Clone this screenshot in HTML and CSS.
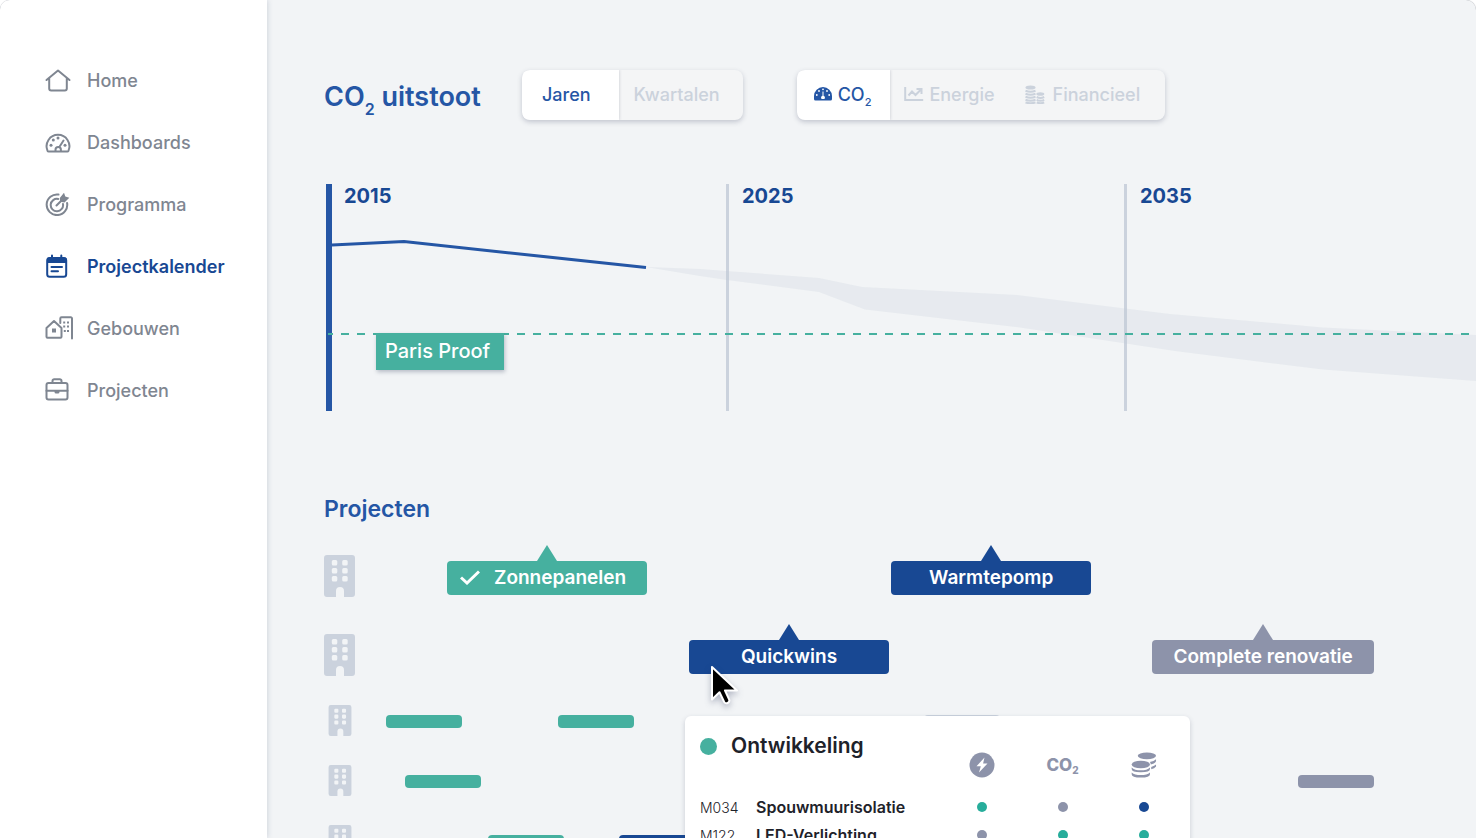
FILE: index.html
```html
<!DOCTYPE html>
<html lang="nl">
<head>
<meta charset="utf-8">
<meta name="viewport" content="width=device-width, initial-scale=1">
<title>Projectkalender</title>
<link rel="stylesheet" href="styles.css">
</head>
<body>
<svg class="sprite" aria-hidden="true">
  <symbol id="building" viewBox="0 0 31 42">
    <path fill-rule="evenodd" d="M3 0h25a3 3 0 0 1 3 3v36a3 3 0 0 1-3 3h-8v-6a4 4 0 0 0-8 0v6H3a3 3 0 0 1-3-3V3a3 3 0 0 1 3-3zM9.300 5a1.500 1.500 0 0 0-1.500 1.500v2.500a1.500 1.500 0 0 0 1.500 1.500h2.500a1.500 1.500 0 0 0 1.500-1.500V6.500a1.500 1.500 0 0 0-1.500-1.500zM19.700 5a1.500 1.500 0 0 0-1.500 1.500v2.500a1.500 1.500 0 0 0 1.500 1.500h2.500a1.500 1.500 0 0 0 1.500-1.500V6.500a1.500 1.500 0 0 0-1.500-1.500zM9.300 13a1.500 1.500 0 0 0-1.500 1.500V17a1.500 1.500 0 0 0 1.500 1.500h2.500a1.500 1.500 0 0 0 1.500-1.500v-2.500a1.500 1.500 0 0 0-1.500-1.500zM19.700 13a1.500 1.500 0 0 0-1.500 1.500V17a1.500 1.500 0 0 0 1.500 1.500h2.500a1.500 1.500 0 0 0 1.500-1.500v-2.500a1.500 1.500 0 0 0-1.500-1.500zM9.300 21a1.500 1.500 0 0 0-1.500 1.500V25a1.500 1.500 0 0 0 1.500 1.500h2.500a1.500 1.500 0 0 0 1.500-1.500v-2.500a1.500 1.500 0 0 0-1.500-1.500zM19.700 21a1.500 1.500 0 0 0-1.500 1.500V25a1.500 1.500 0 0 0 1.500 1.500h2.500a1.500 1.500 0 0 0 1.500-1.500v-2.500a1.500 1.500 0 0 0-1.500-1.500z"/>
  </symbol>
</svg>
<div class="app">
  <nav class="sidebar" aria-label="Hoofdmenu">
    <a class="nav-item" href="#home">
      <svg class="nav-icon" viewBox="0 0 28 24"><path d="M1.500 12 13 2.500l11.500 9.500M4.200 10v10.500a2 2 0 0 0 2 2h13.600a2 2 0 0 0 2-2V10"/></svg>
      Home
    </a>
    <a class="nav-item" href="#dashboards">
      <svg class="nav-icon" viewBox="0 0 28 24"><path d="M3.700 21.500a1.500 1.500 0 0 1-1.200-.8A11.400 11.400 0 1 1 23.500 20.700a1.500 1.500 0 0 1-1.200.8zM10.500 21v-1.300a2.700 2.700 0 0 1 5.400 0V21M14.500 16.700l4-6.200"/><g class="solid"><circle cx="13" cy="8" r="1.500"/><circle cx="8.300" cy="10" r="1.500"/><circle cx="6" cy="15.300" r="1.500"/><circle cx="20" cy="15.300" r="1.500"/></g></svg>
      Dashboards
    </a>
    <a class="nav-item" href="#programma">
      <svg class="nav-icon" viewBox="0 0 28 24"><path d="M13.500 2.600A10.300 10.300 0 1 0 22.100 11M13.200 7A6.200 6.200 0 1 0 18 12M11.500 13.500l5.500-5.500"/><path class="solid" d="M14.800 6 19 .8l1.300 3.700L24.300 5.800 19.500 10.500l-4.400-.8z"/></svg>
      Programma
    </a>
    <a class="nav-item nav-item--active" href="#projectkalender" aria-current="page">
      <svg class="nav-icon" viewBox="0 0 28 24"><rect x="2.200" y="4" width="19" height="18.800" rx="2.500"/><path class="solid" d="M2 4.500Q2 3.500 4 3.500h15.500q2 0 2 1V9H2z"/><path d="M7 1.500V4M16.300 1.500V4M6.500 13h10.500M6.500 17.200h6.500"/></svg>
      Projectkalender
    </a>
    <a class="nav-item" href="#gebouwen">
      <svg class="nav-icon" viewBox="0 0 28 24"><path d="M1.500 12 9 5l7.500 7v8.800a1 1 0 0 1-1 1h-13a1 1 0 0 1-1-1zM15.300 7V2.500a1.200 1.200 0 0 1 1.200-1.200h9.300A1.200 1.200 0 0 1 27 2.500v20"/><g class="solid"><path d="M7 12.500h4v4H7zM18.200 5.500h2v2h-2zM22 5.500h2v2h-2zM18.200 9.500h2v2h-2zM22 9.500h2v2h-2zM18.800 14h2v2h-2zM22 14h2v2h-2z"/></g></svg>
      Gebouwen
    </a>
    <a class="nav-item" href="#projecten">
      <svg class="nav-icon" viewBox="0 0 28 24"><rect x="1.500" y="5" width="21" height="16.500" rx="2"/><path d="M7.500 5V3a1.700 1.700 0 0 1 1.700-1.700h5.600A1.700 1.700 0 0 1 16.500 3v2M1.500 12.800h21"/><path class="solid" d="M9.500 13h5v1a1.500 1.500 0 0 1-1.500 1.500h-2a1.500 1.500 0 0 1-1.500-1.500z"/></svg>
      Projecten
    </a>
  </nav>

  <main class="content">
    <header class="toolbar">
      <h1 class="title">CO<sub>2</sub> uitstoot</h1>
      <div class="segment" role="group" aria-label="Periode">
        <button class="segment-btn segment-btn--on period" type="button" aria-pressed="true">Jaren</button>
        <button class="segment-btn period" type="button" aria-pressed="false">Kwartalen</button>
      </div>
      <div class="segment" role="group" aria-label="Eenheid">
        <button class="segment-btn segment-btn--on unit-co2" type="button" aria-pressed="true">
          <svg class="icon-gauge" viewBox="0 0 18 14"><path fill-rule="evenodd" d="M9 0a9 9 0 0 1 9 9v3a1.500 1.500 0 0 1-1.500 1.500h-15A1.500 1.500 0 0 1 0 12V9a9 9 0 0 1 9-9zM8.500 4.500v4.200a2 2 0 0 0-.9 3.300h2.800a2 2 0 0 0-.9-3.300V4.500z"/><g fill="#fff"><circle cx="9" cy="2.300" r=".9"/><circle cx="5" cy="4" r=".9"/><circle cx="13" cy="4" r=".9"/><circle cx="2.800" cy="8" r=".9"/><circle cx="15.200" cy="8" r=".9"/></g></svg>
          <span>CO<sub>2</sub></span>
        </button>
        <button class="segment-btn unit-energy" type="button" aria-pressed="false">
          <svg class="icon-line" viewBox="0 0 20 16"><path d="M1.200 1v13h18M4.500 9.500 8 5.500l3.500 3.500L16.500 4M12.500 3h5v5"/></svg>
          Energie
        </button>
        <button class="segment-btn unit-money" type="button" aria-pressed="false">
          <svg class="icon-stack" viewBox="0 0 20 19"><g><ellipse cx="5.500" cy="2.500" rx="5" ry="2"/><path d="M.5 5.800q5 2 10 0M.5 8.800q5 2 10 0M.5 11.800q5 2 10 0M.5 14.800q5 2 10 0M.5 17.500q5 1.500 10 0"/><ellipse cx="15.300" cy="9" rx="4" ry="1.800"/><path d="M11.700 12q3.700 2 7.500 0M11.700 14.800q3.700 2 7.500 0M11.700 17.500q3.700 1.500 7.500 0"/></g></svg>
          Financieel
        </button>
      </div>
    </header>

    <section class="chart" aria-label="CO2 uitstoot per jaar">
      <div class="year year--first">2015</div>
      <div class="year">2025</div>
      <div class="year">2035</div>
      <svg class="plot" viewBox="0 0 1150 227" preserveAspectRatio="none" aria-hidden="true">
        <path class="plot-range" d="M320 83 374 85 400 87 493 94 536 103 691 111 799 124.500 844 130 997 143.500 1087 148 1150 151V197L997 185.500 849 167 800 159.500 694 143.500 539 125.500 493 108 401 96 374 92z"/>
        <path class="plot-line" d="M6 61 78 57.500 320 83.500"/>
        <path class="plot-target" d="M2 150H1150"/>
      </svg>
      <span class="target-label">Paris Proof</span>
    </section>

    <section class="projects">
      <h2 class="subtitle">Projecten</h2>
      <div class="rows">
        <div class="row row--large">
          <svg class="building"><use href="#building"/></svg>
          <div class="track">
            <div class="flag flag--green flag--done" style="--start:5.6%;--span:18.35%"><svg class="check" viewBox="0 0 20 15"><path d="M1 7.500 7 13 19 1.500"/></svg>Zonnepanelen</div>
            <div class="flag flag--blue" style="--start:22.4%;--span:18.35%">Warmtepomp</div>
          </div>
        </div>
        <div class="row row--large">
          <svg class="building"><use href="#building"/></svg>
          <div class="track">
            <div class="flag flag--blue" style="--start:27.8%;--span:18.35%">Quickwins</div>
            <div class="flag flag--grey" style="--start:24.15%;--span:20.35%">Complete renovatie</div>
          </div>
        </div>
        <div class="row">
          <svg class="building"><use href="#building"/></svg>
          <div class="track">
            <span class="bar bar--green" style="--start:0%;--span:6.97%"></span>
            <span class="bar bar--green" style="--start:8.8%;--span:6.97%"></span>
            <span class="bar bar--light" style="--start:26.6%;--span:6.97%"></span>
          </div>
        </div>
        <div class="row">
          <svg class="building"><use href="#building"/></svg>
          <div class="track">
            <span class="bar bar--green" style="--start:1.75%;--span:6.97%"></span>
            <span class="bar bar--grey" style="--start:74.95%;--span:6.97%"></span>
          </div>
        </div>
        <div class="row">
          <svg class="building"><use href="#building"/></svg>
          <div class="track">
            <span class="bar bar--green" style="--start:9.35%;--span:6.97%"></span>
            <span class="bar bar--blue" style="--start:5.05%;--span:6.97%"></span>
          </div>
        </div>
      </div>

      <svg class="cursor" viewBox="0 0 34 44" aria-hidden="true"><path d="M5 4v32.500l7.500-7.200 4.700 9.700a2.800 2.800 0 0 0 5-2.400L18 27.500h12z"/></svg>

      <div class="popover">
        <table class="measures">
          <colgroup><col class="col-code"><col class="col-name"><col><col><col></colgroup>
          <thead>
            <tr>
              <th class="phase" colspan="2" scope="colgroup"><span class="phase-name"><span class="phase-dot"></span>Ontwikkeling</span></th>
              <th class="metric" scope="col" aria-label="Energie"><svg class="icon-bolt" viewBox="0 0 26 26"><circle cx="13" cy="13" r="12.500" fill="#8d93aa"/><path fill="#fff" d="M15.500 5.500 7.500 14.300h4.300L10 20.500l8.500-9h-4.400z"/></svg></th>
              <th class="metric" scope="col">CO<sub>2</sub></th>
              <th class="metric" scope="col" aria-label="Financieel"><svg class="icon-coins" viewBox="0 0 26 27"><g fill="#8d93aa"><ellipse cx="16" cy="4" rx="9.500" ry="3.500"/><path d="M19 10.500q4.500-.8 6.500-3v1.500q0 2.500-5.500 4 0-1.500-1-2.500zM20.500 15.500q3.500-1 5-2.500V15q-1.500 2-5 3z"/><ellipse cx="9.700" cy="13" rx="9.500" ry="4"/><path d="M.2 16q3 3 9.500 3t9.500-3v1.700q0 3.300-9.500 3.300T.2 17.700zM.2 21.200q3 2.800 9.500 2.800t9.500-2.800V23q0 3.500-9.500 3.500T.2 23z"/></g></svg></th>
            </tr>
          </thead>
          <tbody>
            <tr><td class="code">M034</td><td class="name">Spouwmuurisolatie</td><td><span class="dot dot--green"></span></td><td><span class="dot dot--grey"></span></td><td><span class="dot dot--blue"></span></td></tr>
            <tr><td class="code">M122</td><td class="name">LED-Verlichting</td><td><span class="dot dot--grey"></span></td><td><span class="dot dot--green"></span></td><td><span class="dot dot--green"></span></td></tr>
          </tbody>
        </table>
      </div>
    </section>
  </main>
</div>
</body>
</html>
```
FILE: styles.css
```css
:root {
  --blue: #184893;
  --blue-soft: #2556a5;
  --green: #46b09f;
  --grey: #8d93aa;
  --line: #cbd2dd;
  --page: #f2f4f6;
}

* { box-sizing: border-box; }

body {
  margin: 0;
  background: #fff;
  font-family: Inter, "Liberation Sans", sans-serif;
  color: #1e222a;
}

sub { line-height: 0; }

.sprite { position: absolute; width: 0; height: 0; }

.app {
  display: flex;
  height: 100vh;
  overflow: hidden;
  border-radius: 10px 10px 0 0;
  background: var(--page);
  box-shadow: 0 0 1px #8b8f98;
}

.sidebar {
  flex: 0 0 267px;
  padding: 49px 0 0 45px;
  background: #fff;
  box-shadow: 0 0 6px rgba(30, 50, 90, .2);
  z-index: 1;
}

.nav-item {
  display: flex;
  align-items: center;
  gap: 14px;
  height: 62px;
  color: #7f8691;
  font-size: 18px;
  font-weight: 500;
  text-decoration: none;
}

.nav-item--active { color: var(--blue); font-weight: 600; }

.nav-icon {
  width: 28px;
  height: 24px;
  fill: none;
  stroke: currentColor;
  stroke-width: 2;
  stroke-linecap: round;
  stroke-linejoin: round;
}

.nav-icon .solid { fill: currentColor; stroke: none; }

.content { flex: 1; min-width: 0; padding: 70px 0 0 57px; }

.toolbar { display: flex; align-items: center; height: 50px; }

.title {
  flex: 0 0 198px;
  margin: 3px 0 0;
  color: var(--blue-soft);
  font-size: 27px;
  font-weight: 600;
  white-space: nowrap;
}

.title sub { font-size: 16px; vertical-align: -9px; }

.segment {
  display: flex;
  height: 50px;
  margin-right: 54px;
  border-radius: 8px;
  background: #f4f5f6;
  box-shadow: 0 2px 5px rgba(50, 60, 90, .25);
  overflow: hidden;
}

.segment-btn {
  display: flex;
  align-items: center;
  padding: 0 0 2px;
  border: 0;
  background: none;
  color: #cbd2dc;
  font: 500 18px Inter, "Liberation Sans", sans-serif;
}

.segment-btn--on {
  background: #fff;
  color: var(--blue-soft);
  box-shadow: 0 0 3px rgba(50, 60, 90, .25);
}

.segment-btn sub { font-size: 11px; vertical-align: -5px; }
.period { padding-left: 15px; padding-right: 23px; }
.period.segment-btn--on { padding-left: 20px; padding-right: 28px; }
.unit-co2 { gap: 6px; padding-left: 17px; padding-right: 19px; }
.unit-energy { gap: 5px; padding-left: 14px; padding-right: 16px; }
.unit-money { gap: 8px; padding-left: 14px; padding-right: 25px; }

.icon-gauge { width: 18px; height: 14px; fill: currentColor; }
.icon-line { width: 20px; height: 16px; fill: none; stroke: currentColor; stroke-width: 2; }
.icon-stack { width: 20px; height: 19px; fill: currentColor; }
.icon-stack path { fill: none; stroke: currentColor; stroke-width: 2; }

.chart {
  position: relative;
  display: grid;
  grid-template-columns: 400fr 398fr 352fr;
  height: 227px;
  margin: 64px 0 0 2px;
}

.year {
  padding-left: 13px;
  border-left: 3px solid var(--line);
  color: var(--blue);
  font-size: 20px;
  font-weight: 700;
  line-height: 24px;
}

.year--first { padding-left: 12px; border-left: 6px solid var(--blue-soft); }

.plot { position: absolute; inset: 0; width: 100%; height: 100%; }
.plot-range { fill: rgba(190, 200, 215, .22); }
.plot-line { fill: none; stroke: var(--blue-soft); stroke-width: 3; }
.plot-target {
  stroke: var(--green);
  stroke-width: 2;
  stroke-dasharray: 8 8;
  stroke-dashoffset: 3;
}

.target-label {
  position: absolute;
  top: 149px;
  left: 50px;
  padding: 0 14px 0 9px;
  background: var(--green);
  box-shadow: 1px 2px 4px rgba(50, 60, 90, .3);
  color: #fff;
  font-size: 20px;
  font-weight: 500;
  line-height: 37px;
}

.projects { position: relative; margin-top: 82px; }

.subtitle {
  margin: 0;
  color: var(--blue-soft);
  font-size: 23px;
  font-weight: 600;
  line-height: 32px;
}

.rows { margin-top: 30px; }

.row { display: flex; height: 31px; margin-bottom: 29px; }
.row--large { height: 42px; }
.row--large + .row--large { margin-top: 37px; }
.row--large:first-child { margin-bottom: 0; }

.building { flex: none; width: 24px; height: 31px; margin: 0 34px 0 4px; fill: var(--line); }
.row--large .building { width: 31px; height: 42px; margin: 0 31px 0 0; }

.track { flex: 1; display: flex; align-items: center; padding-top: 2px; }
.row--large .track { padding-top: 3px; }

.flag,
.bar {
  flex: none;
  width: var(--span);
  margin-left: var(--start);
  border-radius: 4px;
}

.flag {
  position: relative;
  display: flex;
  align-items: center;
  justify-content: center;
  gap: 14px;
  height: 34px;
  color: #fff;
  font-size: 19px;
  font-weight: 600;
  white-space: nowrap;
}

.flag--done { padding-right: 8px; }

.flag::before {
  content: "";
  position: absolute;
  bottom: 100%;
  left: 50%;
  margin-left: -10px;
  border: 10px solid transparent;
  border-top: 0;
  border-bottom: 16px solid var(--tone);
}

.bar { height: 13px; }

.flag, .bar, .dot { background: var(--tone); }
.flag--green, .bar--green { --tone: var(--green); }
.flag--blue, .bar--blue, .dot--blue { --tone: var(--blue); }
.flag--grey, .bar--grey, .dot--grey { --tone: var(--grey); }
.bar--light { --tone: var(--line); }
.dot--green { --tone: #27ad9b; }

.check { width: 20px; height: 15px; fill: none; stroke: #fff; stroke-width: 3; }

.cursor {
  position: absolute;
  top: 170px;
  left: 383px;
  width: 34px;
  height: 44px;
  fill: #000;
  stroke: #fff;
  stroke-width: 2;
  stroke-linejoin: round;
  filter: drop-shadow(0 3px 3px rgba(30, 40, 80, .3));
}

.popover {
  position: absolute;
  top: 223px;
  left: 361px;
  width: 505px;
  padding: 14px 6px 20px 15px;
  border-radius: 6px;
  background: #fff;
  box-shadow: 0 2px 5px rgba(50, 60, 90, .22);
}

.measures { width: 100%; border-collapse: collapse; table-layout: fixed; }
.measures th, .measures td { padding: 0; text-align: center; }
.measures .phase { text-align: left; vertical-align: top; }
.col-code { width: 56px; }
.col-name { width: 185px; }

.phase-name {
  display: flex;
  align-items: center;
  gap: 14px;
  font-size: 21px;
  font-weight: 600;
  line-height: 32px;
}

.phase-dot { width: 17px; height: 17px; border-radius: 50%; background: var(--green); }

.measures thead tr { height: 63px; }
.measures .metric { padding-top: 6px; color: var(--grey); font-size: 17px; font-weight: 800; }
.metric sub { font-size: 10px; vertical-align: -3px; }
.icon-bolt, .icon-coins { display: block; width: 26px; height: 26px; margin: 1px auto 0; }

.measures tbody tr { height: 28px; }
.measures .code { font-size: 14px; font-weight: 300; text-align: left; }
.measures .name { font-size: 16px; font-weight: 600; text-align: left; white-space: nowrap; }
.dot { display: block; width: 10px; height: 10px; margin: 0 auto; border-radius: 50%; }
```
